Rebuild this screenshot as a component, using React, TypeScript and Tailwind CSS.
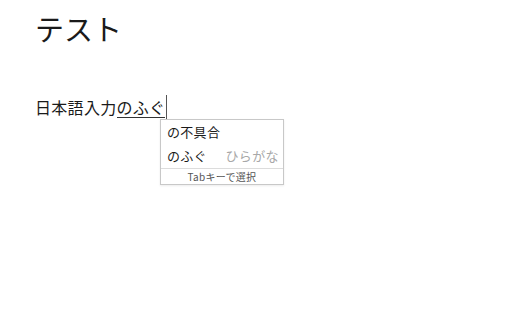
import React from "react"

const jp = { fontFamily: '"Noto Sans CJK JP", "Noto Sans", sans-serif' }

function Candidates() {
  return (
    <div className="absolute left-[125px] top-[24px] w-[124px] border border-[#c8c8c8] bg-white shadow-[0_1px_2px_rgba(0,0,0,0.08)]">
      <div className="flex h-6 items-center px-[6px] text-[13px] text-[#1a1a1a]">の不具合</div>
      <div className="flex h-6 items-center justify-between pl-[6px] pr-[4px] text-[13px] text-[#1a1a1a]">
        <span>のふぐ</span>
        <span className="tracking-[0.4px] text-[#a8a8a8]">ひらがな</span>
      </div>
      <div className="flex h-4 items-center justify-center border-t border-[#dcdcdc] text-[10px] text-[#555]">
        Tabキーで選択
      </div>
    </div>
  )
}

export default function App() {
  return (
    <div className="h-[320px] w-[512px] bg-white pl-[35px] pt-2" style={jp}>
      <h1 className="text-[29px] font-normal leading-10 text-[#1a1a1a]">テスト</h1>
      <div className="relative mt-[47px] flex h-6 items-center text-[16px] leading-6 tracking-[0.3px] text-[#1a1a1a]">
        <span>日本語入力</span>
        <span className="border-b border-[#333] leading-[20px]">のふぐ</span>
        <span className="ml-[1px] h-6 w-px bg-[#555]" />
        <Candidates />
      </div>
    </div>
  )
}
